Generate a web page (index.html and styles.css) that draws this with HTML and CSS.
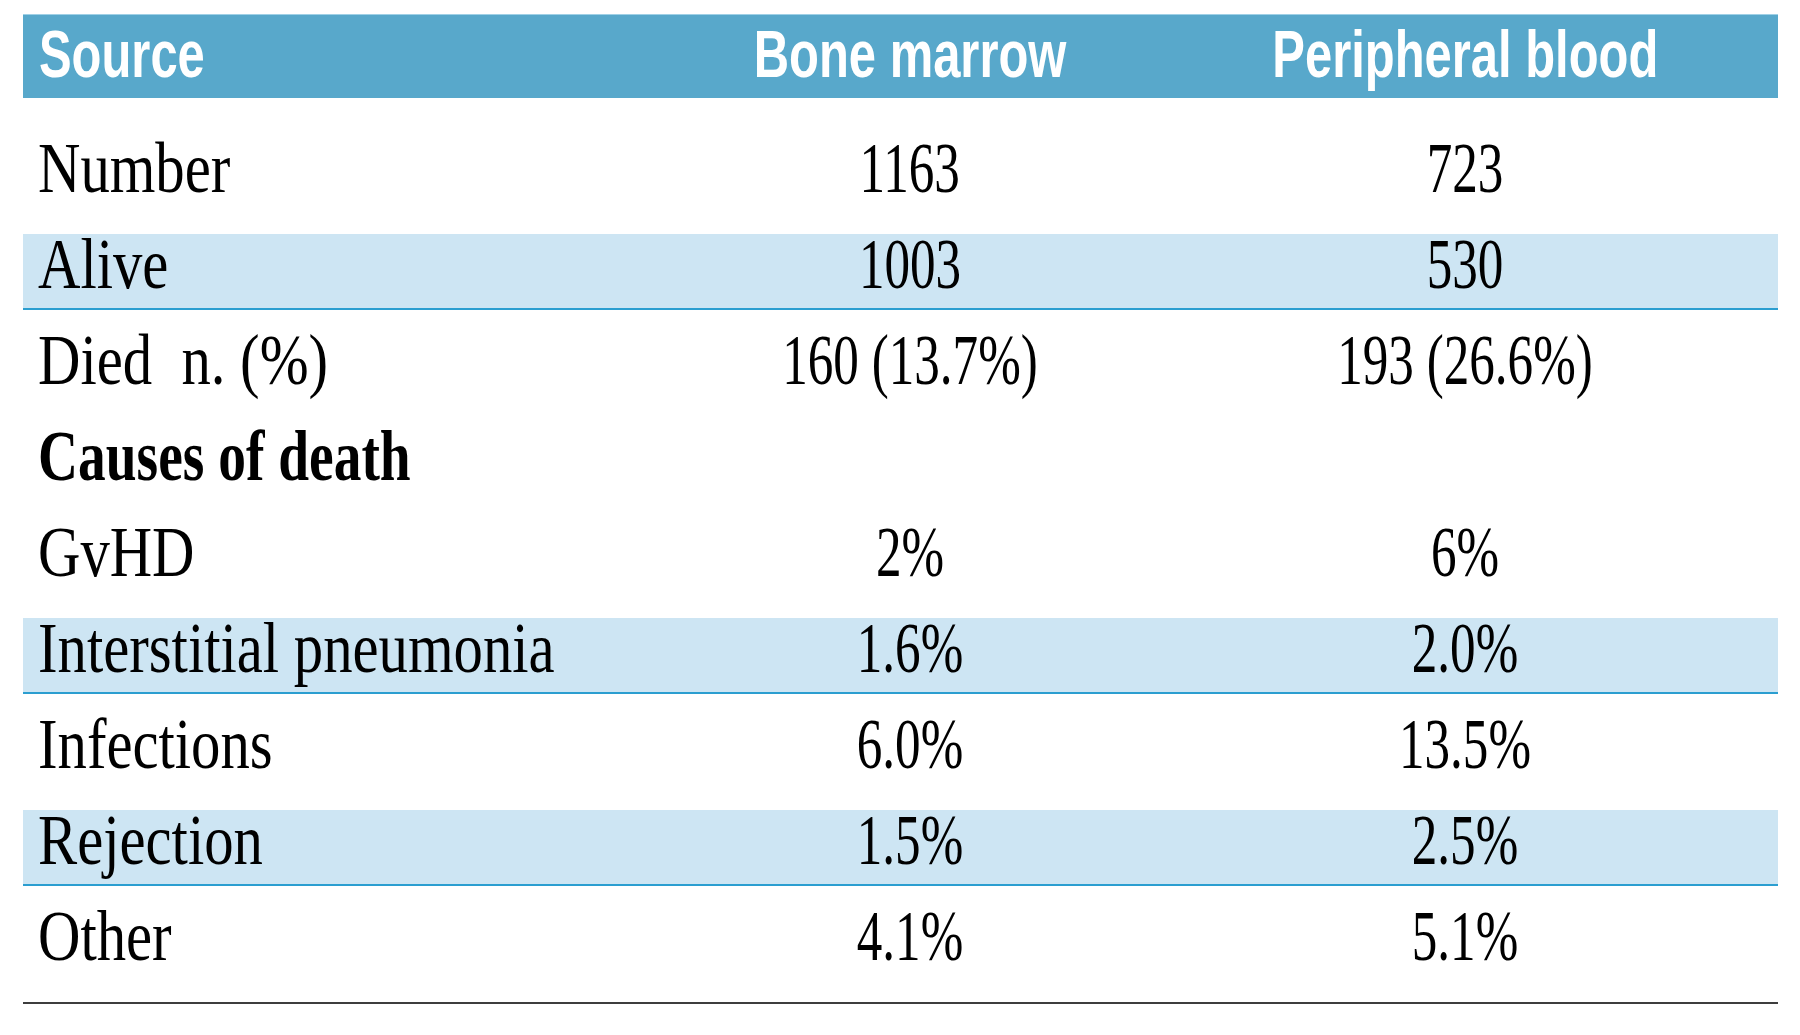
FILE: index.html
```html
<!DOCTYPE html>
<html lang="en">
<head>
<meta charset="utf-8">
<title>Source table</title>
<link rel="stylesheet" href="styles.css">
</head>
<body>
<div class="table">
  <div class="head">
    <div class="cell first"><span class="ht ht-left">Source</span></div>
    <div class="cell mid"><span class="ht">Bone marrow</span></div>
    <div class="cell mid"><span class="ht">Peripheral blood</span></div>
  </div>
  <div class="body">
    <div class="row">
      <div class="cell first"><span class="lbl">Number</span></div>
      <div class="cell mid"><span class="num">1163</span></div>
      <div class="cell mid"><span class="num">723</span></div>
    </div>
    <div class="row shade">
      <div class="cell first"><span class="lbl">Alive</span></div>
      <div class="cell mid"><span class="num">1003</span></div>
      <div class="cell mid"><span class="num">530</span></div>
    </div>
    <div class="row">
      <div class="cell first"><span class="lbl">Died&nbsp; n. (%)</span></div>
      <div class="cell mid"><span class="num">160 (13.7%)</span></div>
      <div class="cell mid"><span class="num">193 (26.6%)</span></div>
    </div>
    <div class="row">
      <div class="cell first"><span class="lbl bold">Causes of death</span></div>
      <div class="cell mid"></div>
      <div class="cell mid"></div>
    </div>
    <div class="row">
      <div class="cell first"><span class="lbl">GvHD</span></div>
      <div class="cell mid"><span class="num">2%</span></div>
      <div class="cell mid"><span class="num">6%</span></div>
    </div>
    <div class="row shade">
      <div class="cell first"><span class="lbl">Interstitial pneumonia</span></div>
      <div class="cell mid"><span class="num">1.6%</span></div>
      <div class="cell mid"><span class="num">2.0%</span></div>
    </div>
    <div class="row">
      <div class="cell first"><span class="lbl">Infections</span></div>
      <div class="cell mid"><span class="num">6.0%</span></div>
      <div class="cell mid"><span class="num">13.5%</span></div>
    </div>
    <div class="row shade">
      <div class="cell first"><span class="lbl">Rejection</span></div>
      <div class="cell mid"><span class="num">1.5%</span></div>
      <div class="cell mid"><span class="num">2.5%</span></div>
    </div>
    <div class="row">
      <div class="cell first"><span class="lbl">Other</span></div>
      <div class="cell mid"><span class="num">4.1%</span></div>
      <div class="cell mid"><span class="num">5.1%</span></div>
    </div>
  </div>
</div>
</body>
</html>
```
FILE: styles.css
```css
html, body {
  margin: 0;
  padding: 0;
  background: #ffffff;
}

.table {
  width: 1755px;
  margin: 14px 0 0 23px;
}

.head,
.row {
  display: grid;
  grid-template-columns: 645px 484px 626px;
}

.head {
  height: 84px;
  box-sizing: border-box;
  padding-bottom: 6px;
  background: #58a8cb;
  border-top: 1px solid #9fd0e6;
  font-family: "Liberation Sans", Arial, sans-serif;
  font-weight: bold;
  font-size: 67px;
  line-height: 77px;
  color: #ffffff;
}

.head .cell.first {
  padding-left: 16px;
}

.cell {
  white-space: nowrap;
  overflow: visible;
}

.cell.first {
  padding-left: 15px;
  text-align: left;
}

.cell.mid {
  text-align: center;
}

.ht {
  display: inline-block;
  transform: scaleX(0.73);
  transform-origin: center;
}

.ht.ht-left {
  transform-origin: left;
}

.body {
  display: flex;
  flex-direction: column;
  gap: 20px;
  padding: 40px 0 20px;
  border-bottom: 2px solid #3d3d3d;
}

.row {
  height: 76px;
  box-sizing: border-box;
  font-family: "Liberation Serif", "Times New Roman", serif;
  font-size: 72px;
  line-height: 60px;
  color: #000000;
}

.row.shade {
  background: #cde5f3;
  border-bottom: 2px solid #2b9ed0;
}

.lbl {
  display: inline-block;
  transform: scaleX(0.815);
  transform-origin: left;
}

.lbl.bold {
  font-weight: bold;
  transform: scaleX(0.77);
}

.num {
  display: inline-block;
  transform: scaleX(0.71);
  transform-origin: center;
}
```
